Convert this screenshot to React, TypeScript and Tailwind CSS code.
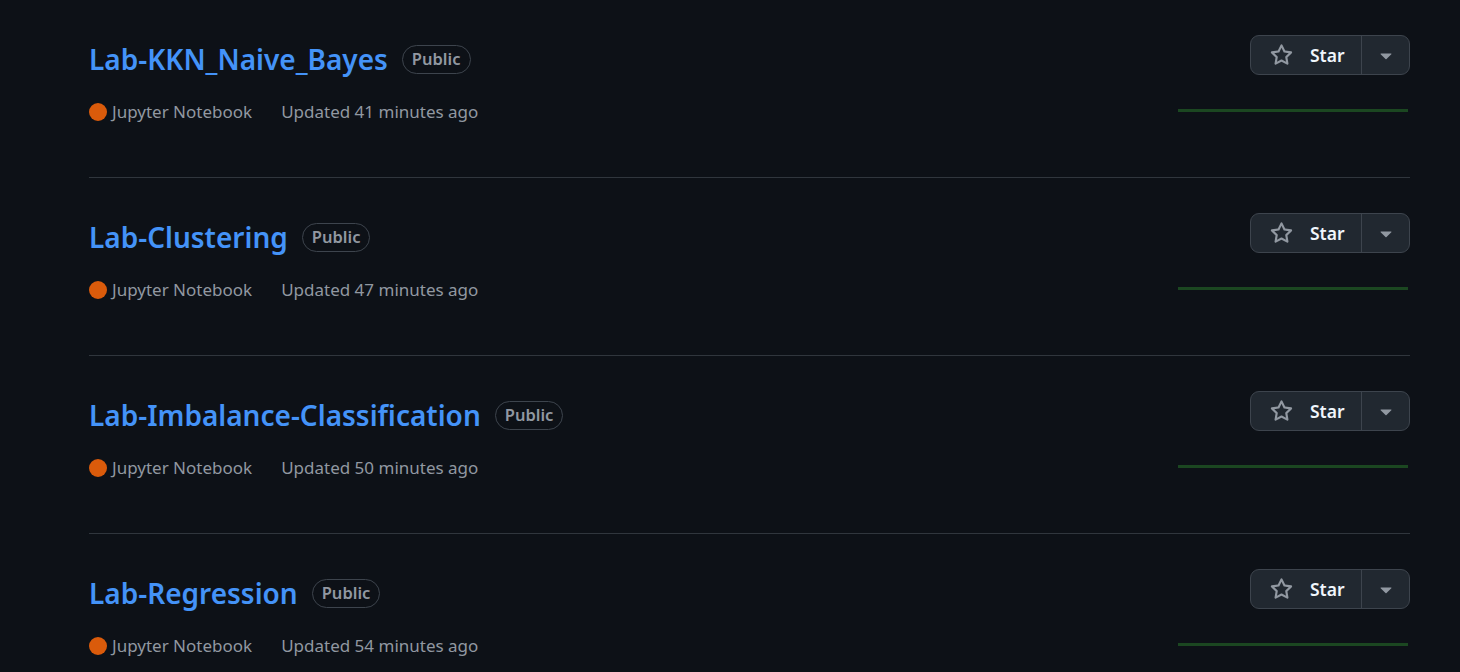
const repos = [
  { name: 'Lab-KKN_Naive_Bayes', updated: 'Updated 41 minutes ago' },
  { name: 'Lab-Clustering', updated: 'Updated 47 minutes ago' },
  { name: 'Lab-Imbalance-Classification', updated: 'Updated 50 minutes ago' },
  { name: 'Lab-Regression', updated: 'Updated 54 minutes ago' },
];

function StarIcon() {
  return (
    <svg viewBox="0 0 16 16" width="23" height="23" fill="#9198a1">
      <path d="M8 .25a.75.75 0 0 1 .673.418l1.882 3.815 4.21.612a.75.75 0 0 1 .416 1.279l-3.046 2.97.719 4.192a.751.751 0 0 1-1.088.791L8 12.347l-3.766 1.98a.75.75 0 0 1-1.088-.79l.72-4.194L.818 6.374a.75.75 0 0 1 .416-1.28l4.21-.611L7.327.668A.75.75 0 0 1 8 .25Zm0 2.445L6.615 5.5a.75.75 0 0 1-.564.41l-3.097.45 2.24 2.184a.75.75 0 0 1 .216.664l-.528 3.084 2.769-1.456a.75.75 0 0 1 .698 0l2.77 1.456-.53-3.084a.75.75 0 0 1 .216-.664l2.24-2.183-3.096-.45a.75.75 0 0 1-.564-.41L8 2.694Z" />
    </svg>
  );
}

function TriangleDown() {
  return (
    <svg viewBox="0 0 16 16" width="24" height="24" fill="#9198a1">
      <path d="m4.427 7.427 3.396 3.396a.25.25 0 0 0 .354 0l3.396-3.396A.25.25 0 0 0 11.396 7H4.604a.25.25 0 0 0-.177.427Z" />
    </svg>
  );
}

function RepoRow({ name, updated }: { name: string; updated: string }) {
  return (
    <div className="flex border-b border-[#30363d] last:border-b-0">
      {/* nome + meta */}
      <div className="flex-1 pt-[37px] pb-[52px]">
        <div className="flex h-[44px] items-center">
          <a className="text-[28px] font-semibold leading-[44px] text-[#4493f8]">{name}</a>
          <span className="ml-[14px] flex h-[29px] items-center rounded-full border border-[#3d444d] px-[9px] text-[16.5px] font-semibold text-[#9198a1]">
            Public
          </span>
        </div>
        <div className="mt-[17px] flex h-[27px] items-center text-[17px] text-[#9198a1]">
          <span className="mr-[5px] h-[18px] w-[18px] rounded-full bg-[#da5b0b]" />
          <span>Jupyter Notebook</span>
          <span className="ml-[29px]">{updated}</span>
        </div>
      </div>

      {/* botão star + sparkline */}
      <div className="flex w-[232px] flex-col items-end pt-[35px]">
        <div className="flex h-[40px] w-[160px] rounded-[9px] border border-[#3d444d] bg-[#212830]">
          <button type="button" className="flex w-[110px] items-center pl-[19px] text-[17.5px] font-semibold text-[#f0f6fc]">
            <StarIcon />
            <span className="ml-[17px]">Star</span>
          </button>
          <button type="button" className="flex flex-1 items-center justify-center border-l border-[#3d444d]">
            <TriangleDown />
          </button>
        </div>
        <div className="mt-[34px] mr-[2px] h-[3px] w-[230px] bg-[#1b4721]" />
      </div>
    </div>
  );
}

export default function App() {
  return (
    <div
      className="min-h-[672px] w-full bg-[#0d1117]"
      style={{ fontFamily: '"Noto Sans", "Open Sans", sans-serif' }}
    >
      <div className="ml-[89px] w-[1321px]">
        {repos.map((r) => (
          <RepoRow key={r.name} name={r.name} updated={r.updated} />
        ))}
      </div>
    </div>
  );
}
